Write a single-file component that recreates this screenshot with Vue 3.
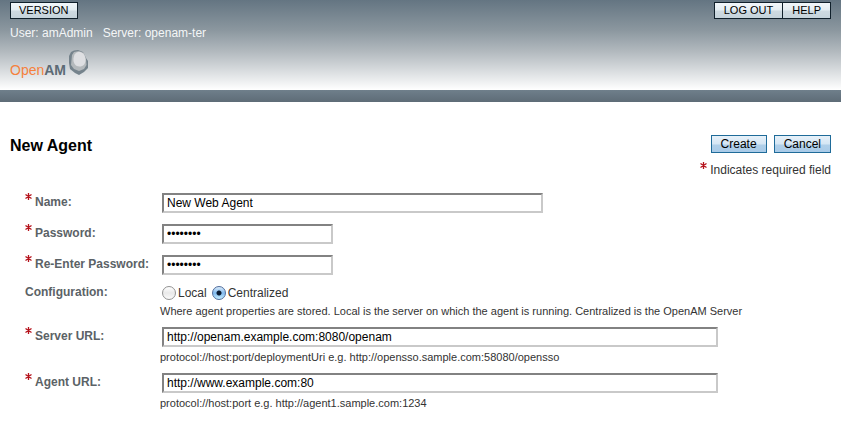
<script setup>
import { reactive } from 'vue'

const form = reactive({
  name: 'New Web Agent',
  password: 'password',
  confirm: 'password',
  configuration: 'centralized',
  serverUrl: 'http://openam.example.com:8080/openam',
  agentUrl: 'http://www.example.com:80'
})

const credentials = [
  { id: 'name', label: 'Name:', type: 'text', size: 'medium' },
  { id: 'password', label: 'Password:', type: 'password', size: 'short' },
  { id: 'confirm', label: 'Re-Enter Password:', type: 'password', size: 'short' }
]

const urls = [
  {
    id: 'serverUrl',
    label: 'Server URL:',
    help: 'protocol://host:port/deploymentUri e.g. http://opensso.sample.com:58080/opensso'
  },
  {
    id: 'agentUrl',
    label: 'Agent URL:',
    help: 'protocol://host:port e.g. http://agent1.sample.com:1234'
  }
]
</script>

<template>
  <div class="page">
    <header class="masthead">
      <div class="top-row">
        <button type="button" class="nav-button">VERSION</button>
        <div class="nav-group">
          <button type="button" class="nav-button">LOG OUT</button>
          <button type="button" class="nav-button">HELP</button>
        </div>
      </div>
      <div class="session">
        <span>User: amAdmin</span>
        <span>Server: openam-ter</span>
      </div>
      <div class="logo">
        <span class="logo-open">Open</span><span class="logo-am">AM</span>
        <svg class="logo-mark" viewBox="0 0 20 26" aria-hidden="true">
          <path d="M5 .5 L9 0 L14 2 L17 8 L19 11 L19 18 L15 22 L10 25 L6 23 L1 19 L0 13 L0 6 L2 2 Z" fill="#75838c" />
          <path d="M5 2 L10 1 L15 3 L17 9 L17.500 15 L15 19 L10 21 L5 19 L2 15 L3 5 Z" fill="#b4b9bc" />
          <path d="M9 2 C13 1.500 16 4 16.500 9 C17 14 14 16.500 10.500 16.500 C6.500 16.500 4 13 4.500 8.500 C5 5 6 2.500 9 2 Z" fill="#dedfe2" />
        </svg>
      </div>
    </header>
    <div class="band"></div>

    <main>
      <div class="title-row">
        <h1>New Agent</h1>
        <div class="actions">
          <button type="submit" form="agent-form" class="action">Create</button>
          <button type="button" class="action">Cancel</button>
        </div>
      </div>
      <div class="legend">
        <svg class="star" viewBox="0 0 7 7" aria-hidden="true">
          <path d="M3.5 0V7M.5 1.5L6.5 5.5M6.5 1.5L.5 5.5" />
        </svg>
        <span>Indicates required field</span>
      </div>

      <form id="agent-form" @submit.prevent>
        <div v-for="field in credentials" :key="field.id" class="row">
          <label class="caption" :for="field.id">
            <svg class="star" viewBox="0 0 7 7" aria-hidden="true">
              <path d="M3.5 0V7M.5 1.5L6.5 5.5M6.5 1.5L.5 5.5" />
            </svg>
            <span>{{ field.label }}</span>
          </label>
          <div class="control">
            <input :id="field.id" v-model="form[field.id]" class="field" :class="field.size" :type="field.type" />
          </div>
        </div>

        <div class="row choice-row" role="radiogroup" aria-labelledby="configuration-label">
          <div id="configuration-label" class="caption">Configuration:</div>
          <div class="control">
            <div class="choices">
              <label><input v-model="form.configuration" type="radio" name="configuration" value="local" />Local</label>
              <label><input v-model="form.configuration" type="radio" name="configuration" value="centralized" />Centralized</label>
            </div>
            <p class="help">Where agent properties are stored. Local is the server on which the agent is running. Centralized is the OpenAM Server</p>
          </div>
        </div>

        <div v-for="field in urls" :key="field.id" class="row url-row">
          <label class="caption" :for="field.id">
            <svg class="star" viewBox="0 0 7 7" aria-hidden="true">
              <path d="M3.5 0V7M.5 1.5L6.5 5.5M6.5 1.5L.5 5.5" />
            </svg>
            <span>{{ field.label }}</span>
          </label>
          <div class="control">
            <input :id="field.id" v-model="form[field.id]" class="field long" type="text" />
            <p class="help">{{ field.help }}</p>
          </div>
        </div>
      </form>
    </main>
  </div>
</template>

<style>
body {
  margin: 0;
  background: #fff;
}
</style>

<style scoped>
.page {
  font: 12px/16px "Liberation Sans", Arial, Helvetica, sans-serif;
  color: #333;
}

button,
input {
  box-sizing: border-box;
  font-family: inherit;
}

.masthead {
  height: 90px;
  box-sizing: border-box;
  padding: 2px 10px 0;
  background: linear-gradient(#647582 0, #8b979f 30px, #b3babf 52px, #fff 90px);
}

.top-row,
.title-row {
  display: flex;
  justify-content: space-between;
}

.nav-group,
.actions {
  display: flex;
}

.actions {
  gap: 7px;
}

.nav-button {
  height: 17px;
  padding: 0 8px;
  border: 1px solid #10202b;
  background: linear-gradient(#f2f7fa 0, #e4edf2 7px, #cedae1 8px, #c5d3db 100%);
  color: #000;
  font-size: 11px;
  line-height: 15px;
}

.nav-group .nav-button {
  padding: 0 9px;
}

.nav-button + .nav-button {
  margin-left: -1px;
}

.session {
  display: flex;
  gap: 10px;
  padding-top: 6px;
  color: #f4f6f7;
}

.logo {
  display: flex;
  align-items: flex-start;
  padding-top: 9px;
  font-size: 14px;
  line-height: 40px;
}

.logo-open {
  color: #f5813c;
}

.logo-am {
  color: #5c6b75;
  font-weight: bold;
}

.logo-mark {
  width: 20px;
  height: 26px;
  margin-left: 3px;
}

.band {
  height: 12px;
  background: linear-gradient(#6f7f8b, #5e6c77);
}

main {
  padding: 33px 10px 20px;
}

h1 {
  margin: 0;
  color: #000;
  font-size: 16px;
  line-height: 22px;
}

.action {
  height: 18px;
  padding: 0 9px;
  border: 1px solid #1f6b99;
  background: linear-gradient(#e7f1f9 0, #d5e6f4 8px, #b0cfe9 9px, #a9cbe8 100%);
  color: #000;
  font-size: 12px;
  line-height: 16px;
}

.legend {
  display: flex;
  justify-content: flex-end;
  gap: 3px;
  padding-top: 5px;
}

.star {
  flex: none;
  width: 7px;
  height: 7px;
  stroke: #b5121b;
  stroke-width: 1.3;
  fill: none;
}

form {
  padding: 15px 0 0 15px;
}

.row {
  display: flex;
  align-items: flex-start;
}

.row + .row {
  margin-top: 11px;
}

.row + .choice-row {
  margin-top: 9px;
}

.row + .url-row {
  margin-top: 8px;
}

.caption {
  display: flex;
  flex: none;
  gap: 3px;
  width: 135px;
  color: #5b6266;
  font-weight: bold;
}

.caption span {
  padding-top: 1px;
  white-space: nowrap;
}

.control {
  flex: 1;
  min-width: 0;
}

.field {
  display: block;
  height: 20px;
  max-width: 100%;
  margin: 0 2px;
  padding: 0 3px;
  border: 2px solid;
  border-color: #828282 #c9c9c9 #c9c9c9 #828282;
  background: #fff;
  color: #000;
  font-size: 12px;
  outline: none;
}

.short {
  width: 171px;
}

.medium {
  width: 381px;
}

.long {
  width: 556px;
}

.choices {
  display: flex;
  gap: 5px;
  height: 17px;
  margin: 0 2px;
}

.choices label {
  display: flex;
  align-items: center;
  gap: 2px;
}

input[type="radio"] {
  appearance: none;
  width: 14px;
  height: 14px;
  margin: 0;
  border: 1px solid #929292;
  border-radius: 50%;
  background: linear-gradient(#fff, #e9e9e9 50%, #fafafa);
}

input[type="radio"]:checked {
  border-color: #4f6c9c;
  background:
    radial-gradient(circle, #0a1c33 0 2px, transparent 3px),
    linear-gradient(#dcecfb, #80b9ee 50%, #c4edff);
}

.help {
  margin: 0;
  padding-top: 2px;
  font-size: 11px;
}
</style>
